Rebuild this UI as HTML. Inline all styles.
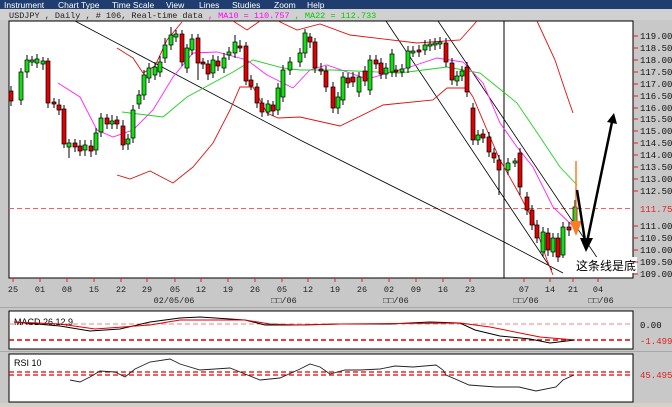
<!DOCTYPE html>
<html><head><meta charset="utf-8"><style>
html,body{margin:0;padding:0;width:672px;height:407px;overflow:hidden;background:#c8c8c8;font-family:"Liberation Sans","Noto Sans CJK SC",sans-serif}
svg{display:block}
</style></head><body>
<svg width="672" height="407" viewBox="0 0 672 407" xmlns="http://www.w3.org/2000/svg" font-family="Liberation Sans, Noto Sans CJK SC, sans-serif">
<rect x="0" y="0" width="672" height="407" fill="#c8c8c8"/>
<!-- menu -->
<rect x="0" y="0" width="672" height="9" fill="#1f3d6e"/>
<g fill="#fff" font-size="8.5">
<text x="4" y="8">Instrument</text><text x="58" y="8">Chart Type</text><text x="112" y="8">Time Scale</text>
<text x="166" y="8">View</text><text x="199" y="8">Lines</text><text x="232" y="8">Studies</text>
<text x="274" y="8">Zoom</text><text x="307" y="8">Help</text>
</g>
<rect x="0" y="9" width="672" height="11" fill="#d0d0d0"/>
<text x="9" y="18" font-size="8.5" font-family="Liberation Mono, monospace"><tspan fill="#222">USDJPY , Daily , # 106, Real-time data </tspan><tspan fill="#ff00ff">, MA10 = 110.757</tspan><tspan fill="#00cc00"> , MA22 = 112.733</tspan></text>
<!-- main panel -->
<rect x="9" y="21" width="624" height="257" fill="#fff" stroke="#000" stroke-width="1"/>
<line x1="9" y1="208.5" x2="633" y2="208.5" stroke="#f06060" stroke-dasharray="5,3" stroke-width="1"/>
<line x1="504" y1="21" x2="504" y2="278" stroke="#000" stroke-width="1"/>
<!-- trendlines -->
<g fill="none" stroke="#000" stroke-width="0.8">
<polyline points="75,21 300,140 504,242 563,273"/>
<polyline points="386,21 552,270"/>
<polyline points="438,21 600,262"/>
</g>
<!-- bollinger -->
<g fill="none" stroke="#e01010" stroke-width="0.9">
<polyline points="117,48 133,58 143,73 155,66 167,40 182,22"/>
<polyline points="233,21 247,30 260,21"/>
<polyline points="278,21 297,30 320,24 350,35 417,43 460,40 477,21"/>
<polyline points="537,21 555,60 565,90 573,113"/>
<polyline points="117,175 130,179 150,171 173,183 193,167 213,143 230,110 240,87 253,87 267,113 278,118 300,117 340,126 383,105 433,100 447,88 467,88 473,97 487,130 500,160 517,190 533,220 547,260 553,275"/>
</g>
<polyline fill="none" stroke="#ff20ff" stroke-width="0.9" points="58,83 80,97 97,130 113,137 133,130 153,110 173,77 193,53 217,52 247,60 267,75 293,88 310,70 327,65 367,79 410,67 437,58 463,62 483,83 500,123 517,147 533,167 553,207 577,230"/>
<polyline fill="none" stroke="#20d020" stroke-width="0.9" points="122,112 163,117 187,97 233,72 253,60 283,68 300,70 333,70 400,73 447,67 480,73 517,103 540,137 560,167 577,185"/>
<!-- wicks -->
<path fill="none" stroke="#000" stroke-width="1" d="M11 86V106M21 68V105M27 55V78M32 56V66M37 54V68M43 57V70M48 58V108M54 98V108M59 99V115M64 105V148M69 139V158M75 139V152M80 140V156M85 140V156M91 140V157M96 128V155M101 113V137M107 114V129M112 115V129M117 116V129M123 120V150M128 134V150M133 105V143M139 90V109M144 70V100M149 63V83M155 62V80M160 56V77M165 38V63M171 27V50M176 30V42M182 30V66M187 44V73M192 34V55M198 34V80M203 58V69M208 60V80M213 55V78M218 56V71M224 53V73M229 47V60M235 35V58M240 40V52M246 42V85M251 75V90M257 83V108M262 98V117M268 100V116M273 101V116M278 83V115M283 65V102M290 57V75M300 48V67M305 29V58M310 33V48M315 38V73M321 63V75M326 66V92M333 82V113M338 92V114M343 72V105M348 73V88M353 72V87M359 72V97M365 66V86M370 55V95M376 55V69M381 58V79M386 63V79M392 49V77M396 65V77M402 64V77M408 46V73M413 46V57M419 45V57M425 40V55M430 39V51M435 38V50M440 37V49M446 38V67M452 58V85M457 71V86M462 66V81M467 62V97M473 103V145M478 130V145M483 129V143M489 132V157M494 148V163M499 155V195M508 158V175M515 158V167M520 148V195M527 192V215M532 205V230M537 220V243M543 227V257M548 228V256M553 233V257M558 233V262M563 222V258M569 222V236M575 200V228"/>
<g stroke="#000" stroke-width="0.7" fill="#e00000">
<rect x="9" y="91" width="4" height="10"/><rect x="46" y="61" width="4" height="42"/><rect x="52" y="102" width="4" height="2"/><rect x="57" y="105" width="4" height="5"/><rect x="62" y="109" width="4" height="35"/><rect x="73" y="143" width="4" height="4"/><rect x="78" y="146" width="4" height="5"/><rect x="89" y="146" width="4" height="5"/><rect x="105" y="118" width="4" height="6"/><rect x="115" y="120" width="4" height="4"/><rect x="121" y="126" width="4" height="19"/><rect x="180" y="34" width="4" height="28"/><rect x="196" y="38" width="4" height="25"/><rect x="201" y="62" width="4" height="2"/><rect x="206" y="64" width="4" height="10"/><rect x="216" y="61" width="4" height="5"/><rect x="238" y="46" width="4" height="2"/><rect x="244" y="46" width="4" height="35"/><rect x="249" y="80" width="4" height="6"/><rect x="255" y="87" width="4" height="16"/><rect x="260" y="103" width="4" height="9"/><rect x="271" y="105" width="4" height="6"/><rect x="308" y="37" width="4" height="5"/><rect x="313" y="42" width="4" height="26"/><rect x="319" y="69" width="4" height="2"/><rect x="324" y="71" width="4" height="16"/><rect x="331" y="87" width="4" height="21"/><rect x="346" y="78" width="4" height="5"/><rect x="351" y="77" width="4" height="5"/><rect x="363" y="71" width="4" height="10"/><rect x="374" y="60" width="4" height="4"/><rect x="379" y="63" width="4" height="11"/><rect x="394" y="70" width="4" height="2"/><rect x="417" y="50" width="4" height="2"/><rect x="444" y="43" width="4" height="19"/><rect x="450" y="63" width="4" height="17"/><rect x="465" y="67" width="4" height="25"/><rect x="471" y="108" width="4" height="32"/><rect x="481" y="134" width="4" height="4"/><rect x="487" y="137" width="4" height="15"/><rect x="492" y="153" width="4" height="5"/><rect x="497" y="160" width="4" height="10"/><rect x="518" y="153" width="4" height="34"/><rect x="525" y="197" width="4" height="13"/><rect x="530" y="210" width="4" height="15"/><rect x="535" y="225" width="4" height="13"/><rect x="546" y="233" width="4" height="17"/><rect x="556" y="238" width="4" height="19"/><rect x="567" y="227" width="4" height="3"/>
</g>
<g stroke="#000" stroke-width="0.7" fill="#10e010">
<rect x="19" y="72" width="4" height="28"/><rect x="25" y="60" width="4" height="12"/><rect x="30" y="60" width="4" height="2"/><rect x="35" y="59" width="4" height="4"/><rect x="41" y="61" width="4" height="3"/><rect x="67" y="143" width="4" height="4"/><rect x="83" y="145" width="4" height="5"/><rect x="94" y="133" width="4" height="17"/><rect x="99" y="118" width="4" height="14"/><rect x="110" y="121" width="4" height="3"/><rect x="126" y="139" width="4" height="5"/><rect x="131" y="110" width="4" height="28"/><rect x="137" y="95" width="4" height="9"/><rect x="142" y="75" width="4" height="20"/><rect x="147" y="68" width="4" height="10"/><rect x="153" y="67" width="4" height="8"/><rect x="158" y="62" width="4" height="10"/><rect x="163" y="45" width="4" height="13"/><rect x="169" y="35" width="4" height="10"/><rect x="174" y="34" width="4" height="3"/><rect x="185" y="48" width="4" height="20"/><rect x="190" y="39" width="4" height="11"/><rect x="211" y="60" width="4" height="13"/><rect x="222" y="58" width="4" height="10"/><rect x="227" y="52" width="4" height="3"/><rect x="233" y="42" width="4" height="11"/><rect x="266" y="104" width="4" height="8"/><rect x="276" y="88" width="4" height="22"/><rect x="281" y="70" width="4" height="27"/><rect x="288" y="62" width="4" height="8"/><rect x="298" y="53" width="4" height="9"/><rect x="303" y="33" width="4" height="20"/><rect x="336" y="97" width="4" height="11"/><rect x="341" y="77" width="4" height="23"/><rect x="357" y="77" width="4" height="15"/><rect x="368" y="60" width="4" height="30"/><rect x="384" y="68" width="4" height="6"/><rect x="390" y="54" width="4" height="18"/><rect x="400" y="69" width="4" height="3"/><rect x="406" y="51" width="4" height="17"/><rect x="411" y="51" width="4" height="2"/><rect x="423" y="45" width="4" height="5"/><rect x="428" y="44" width="4" height="2"/><rect x="433" y="43" width="4" height="2"/><rect x="438" y="42" width="4" height="2"/><rect x="455" y="76" width="4" height="5"/><rect x="460" y="71" width="4" height="5"/><rect x="476" y="135" width="4" height="5"/><rect x="506" y="163" width="4" height="7"/><rect x="513" y="161" width="4" height="2"/><rect x="541" y="232" width="4" height="20"/><rect x="551" y="238" width="4" height="14"/><rect x="561" y="227" width="4" height="28"/><rect x="573" y="207" width="4" height="16"/>
</g>
<!-- arrows -->
<line x1="576" y1="161" x2="576" y2="224" stroke="#ff7a20" stroke-width="1.5"/>
<polygon points="570,221 582,221 576,236" fill="#ff7a20"/>
<polyline points="577,190 586,247 612,122" fill="none" stroke="#000" stroke-width="2.5"/>
<polygon points="580,238 593,238 586,252" fill="#000"/>
<polygon points="607,122 617,124 614,113" fill="#000"/>
<rect x="575" y="257" width="62" height="16" fill="#fff"/>
<text x="576" y="270" font-size="12" fill="#000">这条线是底</text>
<!-- price axis -->
<g font-size="9" fill="#111" font-family="Liberation Mono, monospace">
<text x="640" y="39">119.00</text><text x="640" y="51">118.50</text><text x="640" y="63">118.00</text><text x="640" y="75">117.50</text><text x="640" y="87">117.00</text><text x="640" y="99">116.50</text><text x="640" y="111">116.00</text><text x="640" y="122">115.50</text><text x="640" y="134">115.00</text><text x="640" y="146">114.50</text><text x="640" y="158">114.00</text><text x="640" y="170">113.50</text><text x="640" y="182">113.00</text><text x="640" y="194">112.50</text>
<text x="640" y="212" fill="#e02020">111.75</text>
<text x="640" y="229">111.00</text><text x="640" y="241">110.50</text><text x="640" y="253">110.00</text><text x="640" y="265">109.50</text><text x="640" y="277">109.00</text>
</g>
<path stroke="#e02020" stroke-width="1" d="M633 36h5M633 48h5M633 60h5M633 72h5M633 84h5M633 96h5M633 108h5M633 119h5M633 131h5M633 143h5M633 155h5M633 167h5M633 179h5M633 191h5M633 226h5M633 238h5M633 250h5M633 262h5M633 274h5"/>
<!-- date axis -->
<path stroke="#e02020" stroke-width="1" d="M13 278v4M40 278v4M67 278v4M94 278v4M121 278v4M147 278v4M175 278v4M201 278v4M228 278v4M255 278v4M282 278v4M308 278v4M335 278v4M362 278v4M389 278v4M416 278v4M443 278v4M470 278v4M524 278v4M550 278v4M573 278v4M598 278v4"/>
<g font-size="8.5" fill="#222" text-anchor="middle" font-family="Liberation Mono, monospace">
<text x="13" y="292">25</text><text x="40" y="292">01</text><text x="67" y="292">08</text><text x="94" y="292">15</text><text x="121" y="292">22</text><text x="147" y="292">29</text><text x="175" y="292">05</text><text x="201" y="292">12</text><text x="228" y="292">19</text><text x="255" y="292">26</text><text x="282" y="292">05</text><text x="308" y="292">12</text><text x="335" y="292">19</text><text x="362" y="292">26</text><text x="389" y="292">02</text><text x="416" y="292">09</text><text x="443" y="292">16</text><text x="470" y="292">23</text><text x="524" y="292">07</text><text x="550" y="292">14</text><text x="573" y="292">21</text><text x="598" y="292">04</text>
<text x="174" y="303">02/05/06</text><text x="284" y="303">□□/06</text><text x="396" y="303">□□/06</text><text x="526" y="303">□□/06</text><text x="601" y="303">□□/06</text>
</g>
<line x1="0" y1="307.5" x2="672" y2="307.5" stroke="#a8a8a8"/>
<!-- MACD -->
<rect x="9" y="311" width="624" height="38" fill="#fff" stroke="#000"/>
<line x1="9" y1="324" x2="633" y2="324" stroke="#f08080" stroke-dasharray="5,3"/>
<line x1="9" y1="340" x2="633" y2="340" stroke="#e00000" stroke-width="1.5" stroke-dasharray="5,3"/>
<text x="14" y="325" font-size="9" fill="#000">MACD 26,12,9</text>
<polyline fill="none" stroke="#000" stroke-width="1" points="14,322 60,326 90,331 120,329 150,322 180,318 200,317 245,320 265,325 300,325 340,324 390,324 430,322 460,323 475,330 500,336 530,339 550,343 575,340"/>
<polyline fill="none" stroke="#e00000" stroke-width="1" points="14,322 60,324 95,329 150,325 180,320 245,320 270,324 300,325 340,324 460,323 490,327 540,337 575,340"/>
<text x="640" y="328" font-size="9" fill="#111" font-family="Liberation Mono, monospace">0.00</text>
<text x="640" y="344" font-size="9" fill="#e02020" font-family="Liberation Mono, monospace">-1.499</text>
<line x1="0" y1="351.5" x2="672" y2="351.5" stroke="#a8a8a8"/>
<!-- RSI -->
<rect x="9" y="354" width="624" height="48" fill="#fff" stroke="#000"/>
<line x1="9" y1="372" x2="633" y2="372" stroke="#e00000" stroke-width="1.3" stroke-dasharray="5,3"/>
<line x1="9" y1="375" x2="633" y2="375" stroke="#e00000" stroke-width="1.3" stroke-dasharray="5,3"/>
<text x="14" y="366" font-size="9" fill="#000">RSI 10</text>
<polyline fill="none" stroke="#222" stroke-width="0.9" points="70,380 80,382 90,377 100,371 115,372 125,377 135,369 150,362 170,359 180,364 200,370 230,368 245,374 260,380 280,378 300,369 310,364 320,367 330,374 345,370 360,370 380,369 395,366 413,367 436,365 443,370 446,375 469,385 496,387 519,387 536,391 556,387 563,380 574,375"/>
<text x="640" y="378" font-size="9" fill="#e02020" font-family="Liberation Mono, monospace">45.495</text>
<rect x="0" y="403" width="672" height="4" fill="#d4d0c8"/>
</svg>
</body></html>
